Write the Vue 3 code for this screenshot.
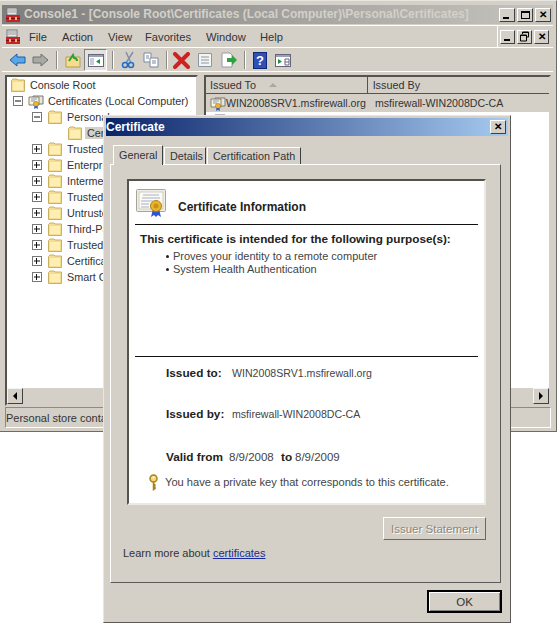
<script setup>
const trees = ['Trusted Root Certification Authorities', 'Enterprise Trust', 'Intermediate Certification Authorities', 'Trusted Publishers', 'Untrusted Certificates', 'Third-Party Root Certification Authorities', 'Trusted People', 'Certificate Enrollment Requests', 'Smart Card Trusted Roots']
</script>

<template>
  <div class="page">
    <svg class="defs" width="0" height="0">
      <defs>
        <symbol id="folder" viewBox="0 0 16 16">
          <path d="M1.5 14.5V3.5L3 2h4l1 1h6.5v11.5z" fill="#f6dc8e" stroke="#c9b063" />
          <path d="M3 13V5h10v8z" fill="#fdeeb4" />
        </symbol>
        <symbol id="toolbox" viewBox="0 0 16 16">
          <rect x="2" y="1" width="10" height="7" fill="#e8e8e8" stroke="#777" />
          <path d="M3 3h8M3 5h8" stroke="#999" />
          <rect x="1" y="8" width="14" height="7" fill="#c8202c" />
          <rect x="1" y="11" width="14" height="1" fill="#7c1018" />
          <rect x="4" y="10" width="2" height="3" fill="#f0c040" />
          <rect x="10" y="10" width="2" height="3" fill="#f0c040" />
        </symbol>
        <symbol id="cert" viewBox="0 0 16 16">
          <path d="M5 3h10v8H5z" fill="#e9e7dc" stroke="#777" />
          <path d="M1 4h10v8H1z" fill="#f6f4e8" stroke="#8a7f60" />
          <path d="M3 6h6M3 8h4" stroke="#8c94b8" />
          <circle cx="8" cy="11" r="2.6" fill="#e8b72c" stroke="#a67c10" stroke-width=".6" />
          <path d="M6.5 13l-.5 3 2-1 2 1-.5-3z" fill="#3a60c8" />
        </symbol>
      </defs>
    </svg>

    <section class="console">
      <header class="title-bar">
        <svg class="app-icon"><use href="#toolbox" /></svg>
        <span class="title-text">Console1 - [Console Root\Certificates (Local Computer)\Personal\Certificates]</span>
        <div class="win-btns">
          <span class="win-btn"><i class="g-min"></i></span>
          <span class="win-btn"><i class="g-max"></i></span>
          <span class="win-btn g-x">✕</span>
        </div>
      </header>

      <div class="menu-row">
        <nav class="menu-bar">
          <svg class="menu-icon"><use href="#toolbox" /></svg>
          <span class="m1">File</span>
          <span class="m2">Action</span>
          <span class="m3">View</span>
          <span class="m4">Favorites</span>
          <span class="m5">Window</span>
          <span>Help</span>
        </nav>
        <div class="win-btns doc-btns">
          <span class="win-btn"><i class="g-min"></i></span>
          <span class="win-btn"><svg width="11" height="11" viewBox="0 0 11 11"><path d="M3.5 3V1h6v5H7.5M1.500 4h6v6h-6z" fill="none" stroke="#000" /><path d="M1 4.500h7M3 1.500h7" stroke="#000" /></svg></span>
          <span class="win-btn g-x">✕</span>
        </div>
      </div>

      <div class="toolbar">
        <svg class="tb t-back" viewBox="0 0 17 16"><path d="M1 8l7-6v3h8v6H8v3z" fill="#58a8e8" stroke="#1c5ca8" /></svg>
        <svg class="tb t-fwd" viewBox="0 0 17 16"><path d="M16 8L9 2v3H1v6h8v3z" fill="#a8a8a4" stroke="#70706c" /></svg>
        <i class="sep s1"></i>
        <svg class="tb t-up" viewBox="0 0 16 16"><path d="M1 15V5h14v10z" fill="#f6dc8e" stroke="#b89c50" /><path d="M4 9l4-6 1 3c2 0 3 1 3 3" fill="none" stroke="#30a030" stroke-width="2" /></svg>
        <span class="tb-pressed">
          <svg width="16" height="16" viewBox="0 0 16 16"><rect x=".5" y="2.500" width="15" height="12" fill="#fff" stroke="#667" /><rect x="1" y="3" width="14" height="2" fill="#9aa0b8" /><rect x="2" y="6" width="4" height="7" fill="#c8ccd8" /><path d="M12 7l-4 2.500 4 2.500z" fill="#209040" /></svg>
        </span>
        <i class="sep s2"></i>
        <svg class="tb t-cut" viewBox="0 0 14 18"><path d="M12 1L5 12M5 1l5 11" stroke="#8090a8" stroke-width="1.500" fill="none" /><circle cx="4" cy="14" r="2.500" fill="none" stroke="#2070c8" stroke-width="1.500" /><circle cx="10" cy="14" r="2.500" fill="none" stroke="#2070c8" stroke-width="1.500" /></svg>
        <svg class="tb t-copy" viewBox="0 0 16 16"><path d="M1 1h7v9H1z" fill="#fff" stroke="#7888a0" /><path d="M7 6h8v9H7z" fill="#fff" stroke="#7888a0" /><path d="M3 4h3M3 6h3M9 9h4M9 11h4" stroke="#7888a0" /></svg>
        <i class="sep s3"></i>
        <svg class="tb t-del" viewBox="0 0 17 17"><path d="M2 2l13 13M15 2L2 15" stroke="#d02020" stroke-width="4" stroke-linecap="round" /></svg>
        <svg class="tb t-prop" viewBox="0 0 16 16"><path d="M1.500 1.500h13v13h-13z" fill="#f4f4f0" stroke="#8898a8" /><path d="M4 5h8M4 8h8M4 11h8" stroke="#8898a8" /></svg>
        <svg class="tb t-exp" viewBox="0 0 17 16"><path d="M2 1h8l2 2v12H2z" fill="#fff" stroke="#99a" /><path d="M7 6h5V3l5 5-5 5v-3H7z" fill="#30a040" /></svg>
        <i class="sep s4"></i>
        <svg class="tb t-help" viewBox="0 0 14 17"><rect x=".5" y=".5" width="13" height="16" fill="#3050b8" stroke="#102878" /><text x="7" y="13" text-anchor="middle" class="help-q">?</text></svg>
        <svg class="tb t-last" viewBox="0 0 16 16"><rect x=".5" y="2.500" width="15" height="12" fill="#fff" stroke="#667" /><rect x="1" y="3" width="14" height="2" fill="#9aa0b8" /><path d="M3 7l4 2.500-4 2.500z" fill="#209040" /><path d="M10 7h4v6h-4zM10 10h4" stroke="#668" fill="none" /></svg>
      </div>

      <div class="panes">
        <aside class="tree">
          <div class="row lv0"><svg class="ic root-ic"><use href="#folder" /></svg><span>Console Root</span></div>
          <div class="row lv1"><i class="exp minus"></i><svg class="ic"><use href="#cert" /></svg><span>Certificates (Local Computer)</span></div>
          <div class="row lv2"><i class="exp minus"></i><svg class="ic"><use href="#folder" /></svg><span>Personal</span></div>
          <div class="row lv3"><svg class="ic"><use href="#folder" /></svg><span class="selected">Certificates</span></div>
          <div v-for="name in trees" :key="name" class="row lv2"><i class="exp plus"></i><svg class="ic"><use href="#folder" /></svg><span>{{ name }}</span></div>
          <div class="hscroll">
            <span class="arrow-btn"><i class="tri-l"></i></span>
          </div>
        </aside>
        <main class="list">
          <div class="cols">
            <span class="col c1">Issued To<i class="sort"></i></span>
            <span class="col c2">Issued By</span>
            <span class="col c3"></span>
          </div>
          <div class="list-row">
            <svg class="ic"><use href="#cert" /></svg>
            <span class="cell1">WIN2008SRV1.msfirewall.org</span>
            <span>msfirewall-WIN2008DC-CA</span>
          </div>
          <div class="list-row plain">
            <svg class="ic"><use href="#cert" /></svg>
          </div>
          <div class="list-fill"></div>
          <div class="hscroll right">
            <span class="arrow-btn"><i class="tri-r"></i></span>
          </div>
        </main>
      </div>

      <footer class="status"><span>Personal store contains 1 certificate.</span></footer>
    </section>

    <section class="dialog">
      <header class="dlg-title">
        <span>Certificate</span>
        <span class="win-btn dlg-x">✕</span>
      </header>
      <div class="tabs">
        <span class="tab active">General</span>
        <span class="tab">Details</span>
        <span class="tab">Certification Path</span>
      </div>
      <div class="tab-panel">
        <div class="info-box">
          <div class="info-head">
            <svg class="big-cert" viewBox="0 0 31 29">
              <rect x=".5" y=".5" width="29" height="22" rx="1" fill="#efeee4" stroke="#a8a494" />
              <rect x="3" y="3" width="24" height="17" fill="#fbfaf4" stroke="#cfcdc0" />
              <path d="M7 6h16M6 9h18M5 12h12M5 15h8M5 18h8" stroke="#a8b0cc" />
              <path d="M17 20l-2 8 3-2 2 2 2-2 3 2-2-8z" fill="#2f55d0" />
              <circle cx="20" cy="17" r="5.500" fill="#e9b62a" stroke="#b08010" />
              <circle cx="20" cy="17" r="2.500" fill="#c98f18" />
            </svg>
            <span class="info-title">Certificate Information</span>
          </div>
          <div class="purpose">
            <p class="purpose-title">This certificate is intended for the following purpose(s):</p>
            <ul>
              <li>Proves your identity to a remote computer</li>
              <li>System Health Authentication</li>
            </ul>
          </div>
          <div class="details">
            <div class="field f-to"><b>Issued to:</b><span>WIN2008SRV1.msfirewall.org</span></div>
            <div class="field f-by"><b>Issued by:</b><span>msfirewall-WIN2008DC-CA</span></div>
            <div class="field f-valid"><b>Valid from</b><span class="date">8/9/2008</span><b>to</b><span class="date">8/9/2009</span></div>
          </div>
          <div class="key-row">
            <svg class="key" viewBox="0 0 11 17"><circle cx="5.500" cy="4.500" r="3.500" fill="#f4d878" stroke="#a88420" stroke-width="1.500" /><circle cx="5.500" cy="3.500" r="1" fill="#fff" /><path d="M5.500 8v7.500l1.500-1V13l-1-1 1-1-1-1" fill="none" stroke="#a88420" stroke-width="1.500" /></svg>
            <span>You have a private key that corresponds to this certificate.</span>
          </div>
        </div>
        <div class="issuer-row"><span class="btn disabled">Issuer Statement</span></div>
        <p class="learn">Learn more about <a href="#" class="link">certificates</a></p>
      </div>
      <div class="dlg-foot"><span class="btn ok">OK</span></div>
    </section>
  </div>
</template>

<style>
html, body { margin: 0; background: #fff; }
</style>

<style scoped>
.page {
  position: relative;
  width: 557px;
  height: 623px;
  overflow: hidden;
  background: #fff;
  font-family: "Liberation Sans", Arial, sans-serif;
  font-size: 10.800px;
  color: #222;
}
.defs { position: absolute; }

.console {
  box-sizing: border-box;
  width: 557px;
  height: 432px;
  background: #d4d0c8;
  padding: 4px 3px 3px 2px;
  border-bottom: 1px solid #6e6c66;
  border-right: 1px solid #6e6c66;
  border-top: 1px solid #e8e6e0;
  display: flex;
  flex-direction: column;
}
.title-bar {
  height: 19px;
  flex: none;
  display: flex;
  align-items: center;
  background: linear-gradient(90deg, #7e7e7e, #c6c4be);
  color: #d4d0c8;
  font-weight: bold;
  font-size: 12px;
  padding-left: 3px;
  white-space: nowrap;
}
.app-icon { width: 16px; height: 16px; flex: none; }
.title-text { margin-left: 3px; margin-bottom: 2px; flex: 1; overflow: hidden; }
.win-btns { display: flex; gap: 2px; padding-right: 2px; }
.win-btn {
  box-sizing: border-box;
  width: 16px;
  height: 14px;
  background: #d4d0c8;
  border: 1px solid;
  border-color: #fff #404040 #404040 #fff;
  display: flex;
  align-items: center;
  justify-content: center;
  color: #000;
  font-size: 10px;
  font-weight: bold;
  line-height: 1;
  position: relative;
}
.g-min { position: absolute; left: 3px; bottom: 2px; width: 6px; height: 2px; background: #000; }
.g-max { width: 9px; height: 8px; border: 1px solid #000; border-top-width: 2px; box-sizing: border-box; }

.menu-row {
  flex: none;
  height: 23px;
  display: flex;
  margin-top: 1px;
  border-top: 1px solid #fff;
  border-bottom: 1px solid #fff;
  box-sizing: border-box;
  padding-left: 3px;
  align-items: center;
}
.menu-bar { flex: 1; display: flex; align-items: center; color: #333; font-size: 11.200px; white-space: nowrap; }
.menu-icon { width: 16px; height: 16px; margin-right: 8px; }
.menu-bar .m1 { width: 33px; }
.menu-bar .m2 { width: 46px; }
.menu-bar .m3 { width: 37px; }
.menu-bar .m4 { width: 61px; }
.menu-bar .m5 { width: 54px; }
.doc-btns { border-left: 1px solid #fff; padding-left: 2px; height: 21px; align-items: center; padding-right: 4px; }
.doc-btns .win-btn { width: 15px; height: 14px; }

.toolbar {
  flex: none;
  height: 24px;
  display: flex;
  align-items: center;
  border-bottom: 1px solid #fff;
  box-sizing: border-box;
  padding: 1px 0 0 7px;
}
.tb { flex: none; }
.t-back { width: 17px; height: 16px; }
.t-fwd { width: 17px; height: 16px; margin-left: 6px; }
.sep { flex: none; width: 1px; height: 18px; background: #8c8a84; box-shadow: 1px 0 #fff; }
.s1 { margin: 0 8px 0 7px; }
.t-up { width: 16px; height: 16px; }
.tb-pressed {
  flex: none;
  box-sizing: border-box;
  width: 23px;
  height: 22px;
  margin-left: 3px;
  display: flex;
  align-items: center;
  justify-content: center;
  border: 1px solid;
  border-color: #808080 #fff #fff #808080;
  background: #e4e2dc;
}
.s2 { margin: 0 8px 0 5px; }
.t-cut { width: 14px; height: 18px; }
.t-copy { width: 16px; height: 16px; margin-left: 8px; }
.s3 { margin: 0 6px 0 7px; }
.t-del { width: 17px; height: 17px; }
.t-prop { width: 16px; height: 16px; margin-left: 7px; }
.t-exp { width: 17px; height: 16px; margin-left: 7px; }
.s4 { margin: 0 8px 0 7px; }
.t-help { width: 14px; height: 17px; }
.t-last { width: 16px; height: 16px; margin-left: 8px; }
.help-q { fill: #fff; font: bold 13px "Liberation Sans", sans-serif; }

.panes { flex: 1; min-height: 0; display: flex; gap: 6px; margin-top: 3px; padding: 0 2px 0 3px; }
.tree, .list {
  position: relative;
  box-sizing: border-box;
  background: #fff;
  border: 2px solid;
  border-color: #55534e #d4d0c8 #d4d0c8 #55534e;
  overflow: hidden;
}
.tree { width: 193px; flex: none; padding-top: 0; }
.row { height: 16px; display: flex; align-items: center; white-space: nowrap; color: #333; }
.ic { width: 16px; height: 16px; flex: none; }
.row > span { margin-left: 4px; }
.lv0 { padding-left: 3px; }
.lv1 { padding-left: 6px; }
.lv2 { padding-left: 25px; }
.lv3 { padding-left: 60px; }
.lv1 .ic, .lv2 .ic { margin-left: 5px; }
.selected { background: #d4d0c8; padding: 0 2px; margin-left: 2px !important; }
.exp {
  box-sizing: border-box;
  width: 10px;
  height: 10px;
  border: 1px solid #777;
  background: #fff;
  flex: none;
  position: relative;
}
.exp::before { content: ""; position: absolute; left: 1px; top: 3px; width: 6px; height: 2px; background: #111; transform: scaleY(.5); }
.plus::after { content: ""; position: absolute; left: 3px; top: 1px; width: 1px; height: 6px; background: #111; }

.hscroll {
  position: absolute;
  left: 0;
  right: 0;
  bottom: 0;
  height: 16px;
  background: #d4d0c8;
  display: flex;
}
.hscroll.right { justify-content: flex-end; }
.arrow-btn {
  box-sizing: border-box;
  width: 16px;
  height: 16px;
  background: #d4d0c8;
  border: 1px solid;
  border-color: #f4f4f0 #404040 #404040 #f4f4f0;
  display: flex;
  align-items: center;
  justify-content: center;
}
.tri-l { border: 4px solid transparent; border-left: 0; border-right: 4px solid #000; }
.tri-r { border: 4px solid transparent; border-right: 0; border-left: 4px solid #000; }

.list { flex: 1; min-width: 0; display: flex; flex-direction: column; }
.cols { flex: none; height: 17px; display: flex; background: #d4d0c8; }
.col {
  box-sizing: border-box;
  height: 17px;
  line-height: 16px;
  padding-left: 4px;
  border-right: 1px solid #55534e;
  border-bottom: 1px solid #55534e;
  color: #333;
  white-space: nowrap;
}
.c1 { width: 164px; }
.c2 { width: 180px; border-right: 0; padding-left: 5px; }
.c3 { flex: 1; border-right: 0; }
.sort { display: inline-block; margin-left: 13px; margin-bottom: 2px; border: 4px solid transparent; border-top: 0; border-bottom: 4px solid #aaa7a0; }
.list-row { flex: none; height: 18px; display: flex; align-items: center; white-space: nowrap; background: #d4d0c8; padding-left: 4px; color: #333; font-size: 10.600px; }
.list-row.plain { background: #fff; height: 16px; }
.cell1 { width: 149px; }
.list-fill { flex: 1; }

.status {
  flex: none;
  height: 21px;
  margin: 1px 2px 0 3px;
  box-sizing: border-box;
  border: 1px solid;
  border-color: #8c8a84 #fff #fff #8c8a84;
  display: flex;
  align-items: center;
  padding-left: 0;
  white-space: nowrap;
  overflow: hidden;
  color: #333;
  font-size: 11px;
}

.dialog {
  position: absolute;
  left: 103px;
  top: 115px;
  width: 408px;
  height: 508px;
  box-sizing: border-box;
  background: #d4d0c8;
  border: 1px solid;
  border-color: #e8e6e0 #5c5a56 #5c5a56 #e8e6e0;
  padding: 2px;
  display: flex;
  flex-direction: column;
}
.dlg-title {
  flex: none;
  height: 18px;
  background: linear-gradient(90deg, #0a246a, #a6caf0);
  color: #fff;
  font-weight: bold;
  font-size: 12px;
  display: flex;
  align-items: center;
  justify-content: space-between;
  padding: 0 2px 0 0;
}
.dlg-x { width: 16px; height: 14px; }

.tabs { flex: none; display: flex; align-items: flex-end; height: 28px; padding-left: 7px; gap: 1px; position: relative; z-index: 1; }
.tab {
  box-sizing: border-box;
  height: 17px;
  line-height: 16px;
  padding: 0 5px;
  background: #d4d0c8;
  border: 1px solid;
  border-color: #fff #404040 transparent #fff;
  border-bottom: 0;
  color: #333;
  white-space: nowrap;
}
.tab.active { height: 20px; line-height: 18px; width: 50px; padding: 0 5px; margin-bottom: -1px; }
.tab:nth-child(2) { width: 42px; }
.tab:nth-child(3) { width: 94px; }
.tab-panel {
  box-sizing: border-box;
  flex: none;
  height: 419px;
  margin: 0 7px 0 4px;
  border: 1px solid;
  border-color: #fff #5c5a56 #5c5a56 #fff;
  padding: 14px 14px 0 16px;
}
.info-box {
  box-sizing: border-box;
  height: 326px;
  background: #fff;
  border: 2px solid;
  border-color: #55534e #ece9e2 #ece9e2 #55534e;
  padding: 0 6px;
  display: flex;
  flex-direction: column;
  color: #444;
  font-size: 10.600px;
}
.info-head {
  flex: none;
  height: 40px;
  display: flex;
  align-items: flex-end;
  border-bottom: 1px solid #111;
  padding-bottom: 3px;
  box-sizing: content-box;
}
.big-cert { width: 31px; height: 29px; margin-left: 1px; margin-bottom: 3px; flex: none; }
.info-title { font-weight: bold; font-size: 12px; color: #222; margin-left: 11px; margin-bottom: 7px; }
.purpose { flex: none; height: 132px; border-bottom: 1px solid #111; box-sizing: border-box; }
.purpose-title { margin: 6px 0 0 5px; font-weight: bold; font-size: 11.750px; color: #222; line-height: 15px; white-space: nowrap; }
.purpose ul { margin: 4px 0 0; padding: 0 0 0 38px; list-style: none; }
.purpose li { line-height: 13px; font-size: 11px; position: relative; white-space: nowrap; }
.purpose li::before { content: ""; position: absolute; left: -7px; top: 5px; width: 3px; height: 3px; border-radius: 50%; background: #222; }
.details { flex: 1; padding-left: 31px; }
.field { display: flex; white-space: nowrap; align-items: baseline; line-height: 14px; }
.field b { color: #222; font-size: 11.800px; }
.date { font-size: 11.500px; }
.f-to { margin-top: 9px; }
.f-to b, .f-by b { width: 66px; }
.f-by { margin-top: 27px; }
.f-valid { margin-top: 29px; }
.f-valid b:first-child { width: 63px; }
.f-valid span:nth-child(2) { width: 52px; }
.f-valid b:nth-child(3) { width: 14px; }
.key-row { flex: none; display: flex; align-items: center; height: 20px; padding-left: 13px; margin-bottom: 11px; white-space: nowrap; font-size: 11.100px; }
.key { width: 11px; height: 17px; flex: none; margin-right: 6px; }
.issuer-row { display: flex; justify-content: flex-end; margin-top: 12px; }
.btn {
  box-sizing: border-box;
  display: flex;
  align-items: center;
  justify-content: center;
  background: #d4d0c8;
  white-space: nowrap;
}
.btn.disabled {
  width: 103px;
  height: 23px;
  border: 1px solid;
  border-color: #fff #6a6864 #6a6864 #fff;
  color: #8a8880;
  text-shadow: 1px 1px 0 #fff;
  font-size: 11.500px;
}
.learn { margin: 6px 0 0 -4px; line-height: 14px; color: #333; white-space: nowrap; font-size: 11px; }
.link { color: #1a2a9a; text-decoration: underline; }
.dlg-foot { flex: 1; display: flex; justify-content: flex-end; align-items: center; padding-right: 6px; }
.btn.ok {
  width: 75px;
  height: 23px;
  border: 2px solid #000;
  box-shadow: inset 1px 1px 0 #fff, inset -1px -1px 0 #808080;
  color: #333;
  font-size: 11.500px;
}
</style>
